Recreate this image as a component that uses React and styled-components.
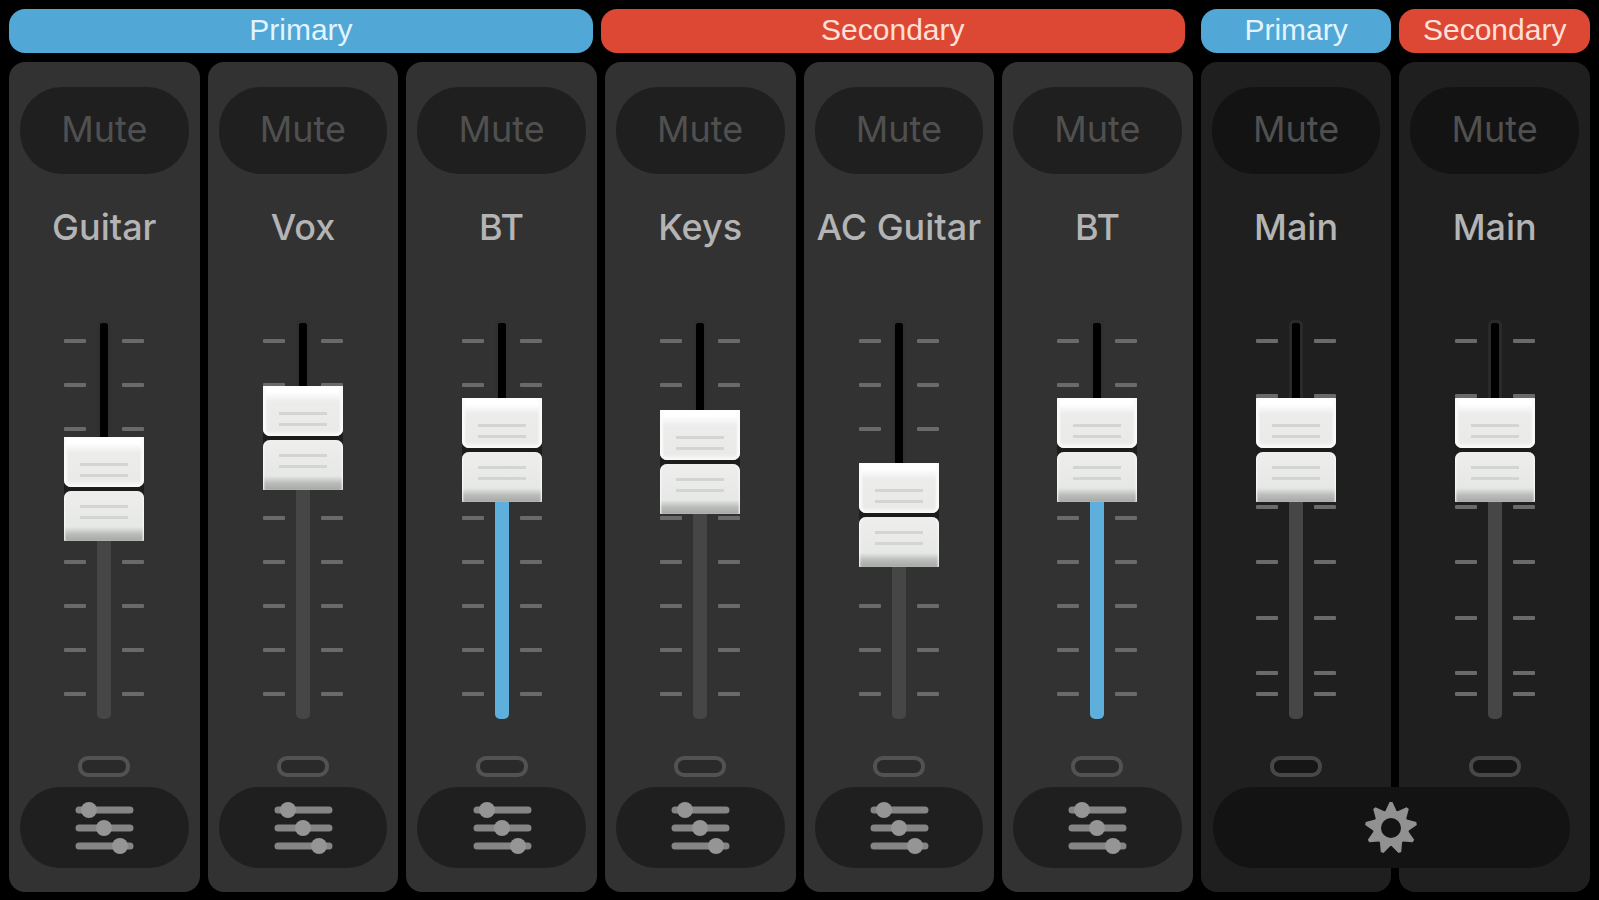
import { useState } from "react";
import styled, { createGlobalStyle } from "styled-components";

const CAP_HEIGHT = 104;

const channels = [
  { id: "guitar", name: "Guitar", level: 60.5 },
  { id: "vox", name: "Vox", level: 77.5 },
  { id: "bt-1", name: "BT", level: 73.5, stereo: true },
  { id: "keys", name: "Keys", level: 69.5 },
  { id: "ac-guitar", name: "AC Guitar", level: 51.5 },
  { id: "bt-2", name: "BT", level: 73.5, stereo: true },
];

const masters = [
  { id: "main-primary", name: "Main", bus: "Primary", level: 73.5 },
  { id: "main-secondary", name: "Main", bus: "Secondary", level: 73.5 },
];

const GlobalStyle = createGlobalStyle`
  *, *::before, *::after {
    margin: 0;
    padding: 0;
    box-sizing: border-box;
  }
  body {
    background: #000000;
    font-family: Inter, "Liberation Sans", sans-serif;
  }
  button {
    border: none;
    cursor: pointer;
    font-family: inherit;
  }
`;

// nine pointed teeth around a ring
const gearPath = () => {
  const teeth = 9;
  const step = (Math.PI * 2) / teeth;
  const point = (radius, angle) =>
    `${(27 + radius * Math.sin(angle)).toFixed(2)} ${(27 - radius * Math.cos(angle)).toFixed(2)}`;
  const points = [];
  for (let i = 0; i < teeth; i++) {
    const a = i * step;
    points.push(point(18, a - step * 0.45));
    points.push(point(26, a - step * 0.08));
    points.push(point(26, a + step * 0.08));
    points.push(point(18, a + step * 0.45));
  }
  return `M${points.join("L")}Z M27 17a10 10 0 1 0 0 20a10 10 0 1 0 0 -20Z`;
};

const GearIcon = () => (
  <svg width="54" height="54" viewBox="0 0 54 54" aria-hidden="true">
    <path d={gearPath()} fill="#919191" fillRule="evenodd" />
  </svg>
);

const SlidersIcon = () => (
  <svg width="60" height="54" viewBox="0 0 60 54" aria-hidden="true">
    <g stroke="#858585" strokeWidth="7" strokeLinecap="round">
      <path d="M5 9H56M5 27H56M5 45H56" />
    </g>
    <g fill="#959595">
      <circle cx="15" cy="9" r="8" />
      <circle cx="30" cy="27" r="8" />
      <circle cx="46" cy="45" r="8" />
    </g>
  </svg>
);

const Fader = ({ label, start, master, stereo }) => {
  const [level, setLevel] = useState(start);
  const travel = `(100% - ${CAP_HEIGHT}px)`;

  return (
    <FaderBox>
      <Groove $master={master} />
      <Level $lit={stereo} style={{ height: `calc(${travel} * ${level / 100} + 20px)` }} />
      <Scale $master={master}>
        {Array.from({ length: master ? 8 : 9 }, (_, i) => (
          <Tick key={i} />
        ))}
      </Scale>
      <Cap style={{ top: `calc(${travel} * ${(100 - level) / 100})` }}>
        <CapTop />
        <CapBottom />
      </Cap>
      <FaderInput
        type="range"
        min="0"
        max="100"
        step="0.5"
        aria-label={`${label} level`}
        value={level}
        onChange={(e) => setLevel(Number(e.target.value))}
      />
    </FaderBox>
  );
};

const Strip = ({ channel, column, master }) => {
  const [muted, setMuted] = useState(false);

  return (
    <StripBox $master={master} $column={column}>
      <MuteButton $master={master} $on={muted} aria-pressed={muted} onClick={() => setMuted(!muted)}>
        Mute
      </MuteButton>
      <Name>{channel.name}</Name>
      <Fader
        label={channel.bus ? `${channel.bus} ${channel.name}` : channel.name}
        start={channel.level}
        stereo={channel.stereo}
        master={master}
      />
      <Led $master={master} />
      {!master && (
        <SettingsButton aria-label={`${channel.name} settings`}>
          <SlidersIcon />
        </SettingsButton>
      )}
    </StripBox>
  );
};

const App = () => {
  return (
    <>
      <GlobalStyle />
      <Console>
        <Banks>
          <Banner $bus="Primary">Primary</Banner>
          <Banner $bus="Secondary">Secondary</Banner>
        </Banks>
        {masters.map((m) => (
          <Banner key={m.id} $bus={m.bus}>
            {m.bus}
          </Banner>
        ))}
        {channels.map((c, i) => (
          <Strip key={c.id} channel={c} column={i + 1} />
        ))}
        {masters.map((m, i) => (
          <Strip key={m.id} channel={m} column={channels.length + i + 1} master />
        ))}
        <MasterButton aria-label="Mixer settings">
          <GearIcon />
        </MasterButton>
      </Console>
    </>
  );
};

const Console = styled.main`
  display: grid;
  grid-template-columns: repeat(8, minmax(0, 1fr));
  grid-template-rows: 44px 1fr;
  gap: 9px 8px;
  min-height: 100vh;
  padding: 9px 9px 8px;
`;

const Banks = styled.div`
  grid-column: span 6;
  display: flex;
  gap: 8px;
  padding-right: 8px;
`;

const Banner = styled.h2`
  flex: 1;
  padding-top: 3px;
  border-radius: 16px;
  background: ${({ $bus }) => ($bus === "Primary" ? "#51a7d5" : "#dd4835")};
  color: ${({ $bus }) => ($bus === "Primary" ? "#e2f4ff" : "#ffe0d8")};
  font-family: "Liberation Sans", Arial, sans-serif;
  font-size: 30px;
  font-weight: normal;
  line-height: 36px;
  text-align: center;
`;

const StripBox = styled.section`
  grid-row: 2;
  grid-column: ${({ $column }) => $column};
  display: flex;
  flex-direction: column;
  align-items: center;
  padding: ${({ $master }) => ($master ? "25px 11px 115px" : "25px 11px 24px")};
  border-radius: 16px;
  background: ${({ $master }) => ($master ? "#1f1f1f" : "#323232")};
`;

const MuteButton = styled.button`
  width: 100%;
  height: 87px;
  padding-bottom: 3px;
  border-radius: 42px;
  background: ${({ $master }) => ($master ? "#131313" : "#1f1f1f")};
  color: ${({ $on }) => ($on ? "#dd4835" : "#505050")};
  font-size: 36px;
`;

const Name = styled.h3`
  margin: 33px 0 73px;
  color: #b4b4b4;
  font-size: 36px;
  font-weight: 500;
  line-height: 40px;
  white-space: nowrap;
`;

const FaderBox = styled.div`
  position: relative;
  flex: 1;
  display: grid;
  grid-template-rows: 100%;
  justify-items: center;
  width: 80px;
  min-height: 300px;
  > * {
    grid-area: 1 / 1;
  }
`;

const Groove = styled.div`
  width: 14px;
  border: 3px solid ${({ $master }) => ($master ? "#2a2a2a" : "#303030")};
  border-bottom: none;
  border-radius: 5px;
  background: #000000;
`;

const Level = styled.div`
  align-self: end;
  width: 14px;
  border-radius: 0 0 5px 5px;
  background: ${({ $lit }) => ($lit ? "#5fafdc" : "#464646")};
`;

const Scale = styled.div`
  display: grid;
  grid-template-rows: ${({ $master }) => ($master ? "repeat(6, 55fr) 21fr 4px" : "repeat(8, 1fr) 4px")};
  width: 100%;
  padding: 19px 0 23px;
`;

const Tick = styled.div`
  display: flex;
  justify-content: space-between;
  &::before,
  &::after {
    content: "";
    width: 22px;
    height: 4px;
    border-radius: 1px;
    background: #6a6a6a;
  }
`;

const Cap = styled.div`
  position: absolute;
  left: 0;
  display: flex;
  flex-direction: column;
  justify-content: space-between;
  width: 100%;
  height: ${CAP_HEIGHT}px;
  background: linear-gradient(#1c1c1c, #1c1c1c) center / 100% 18px no-repeat;
`;

const CapHalf = styled.div`
  height: 50px;
  box-shadow: inset 3px 0 2px #fafafa, inset -3px 0 2px #fafafa;
  &::before {
    content: "";
    display: block;
    width: 48px;
    height: 14px;
    margin: 0 auto;
    border: solid #d3d5d3;
    border-width: 3px 0;
  }
`;

const CapTop = styled(CapHalf)`
  padding-top: 26px;
  border-radius: 1px 1px 7px 7px;
  background: linear-gradient(#ffffff 6px, #ececeb 16px, #eaebe9 44px, #fafafa);
`;

const CapBottom = styled(CapHalf)`
  padding-top: 14px;
  border-radius: 7px 7px 1px 1px;
  background: linear-gradient(#eeeeed, #e6e8e6 36px, #bbbdbb 43px, #a6a8a6);
  box-shadow: inset 2px 0 2px -1px #fafafa, inset -2px 0 2px -1px #fafafa;
`;

const FaderInput = styled.input`
  z-index: 1;
  width: 80px;
  height: 100%;
  opacity: 0;
  cursor: pointer;
  writing-mode: vertical-lr;
  direction: rtl;
`;

const Led = styled.div`
  width: 52px;
  height: 21px;
  margin-top: 37px;
  border: 4px solid ${({ $master }) => ($master ? "#474747" : "#525252")};
  border-radius: 10px;
  background: ${({ $master }) => ($master ? "#161616" : "#2a2a2a")};
`;

const SettingsButton = styled.button`
  display: flex;
  align-items: center;
  justify-content: center;
  width: 100%;
  height: 81px;
  margin-top: 10px;
  border-radius: 40px;
  background: #1f1f1f;
`;

const MasterButton = styled(SettingsButton)`
  grid-column: 7 / 9;
  grid-row: 2;
  align-self: end;
  width: auto;
  margin: 0 20px 24px 12px;
  background: #131313;
`;

export default App;
